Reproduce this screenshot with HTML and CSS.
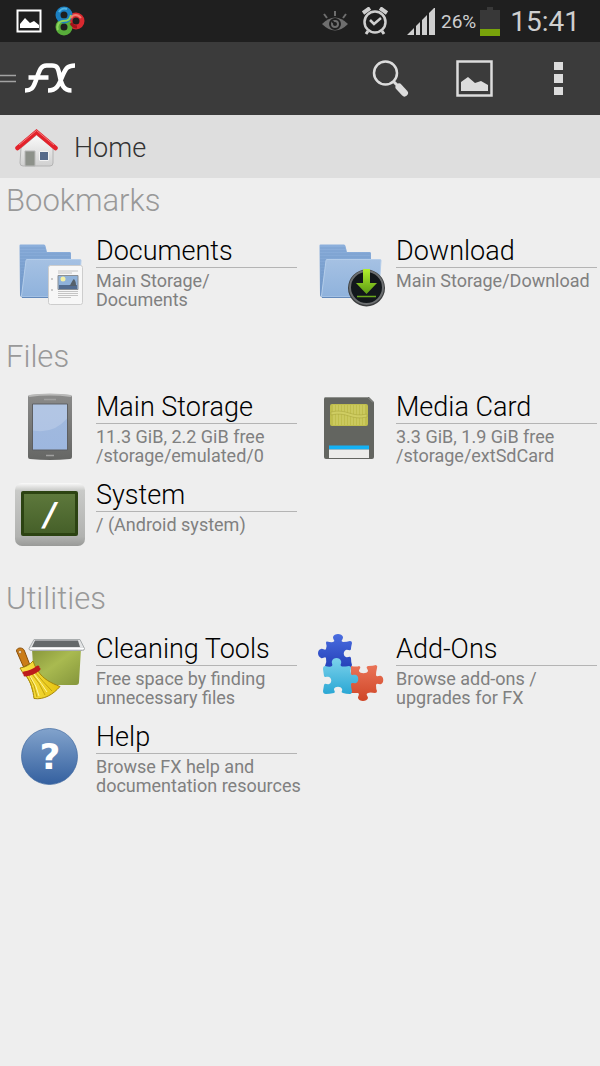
FILE: index.html
```html
<!DOCTYPE html>
<html lang="en">
<head>
  <meta charset="UTF-8" />
  <meta name="viewport" content="width=device-width, initial-scale=1.0"/>
  <title>FX File Explorer</title>
  <link rel="stylesheet" href="styles.css">
</head>
<body>
  <!-- shared gradients and the folder shape -->
  <svg class="defs" width="0" height="0" aria-hidden="true">
    <defs>
      <linearGradient id="g-back" x1="0" y1="0" x2="0" y2="1"><stop offset="0" stop-color="#8db0dc"/><stop offset="1" stop-color="#6d94c6"/></linearGradient>
      <linearGradient id="g-front" x1="0" y1="0" x2="0" y2="1"><stop offset="0" stop-color="#a5c1e3"/><stop offset="1" stop-color="#8fb2dc"/></linearGradient>
      <linearGradient id="g-arrow" x1="0" y1="0" x2="0" y2="1"><stop offset="0" stop-color="#b2f02c"/><stop offset="1" stop-color="#5c9c14"/></linearGradient>
      <linearGradient id="g-case" x1="0" y1="0" x2="0" y2="1"><stop offset="0" stop-color="#8b8b8a"/><stop offset="1" stop-color="#656664"/></linearGradient>
      <linearGradient id="g-glass" x1="0" y1="0" x2="0" y2="1"><stop offset="0" stop-color="#a2bade"/><stop offset="1" stop-color="#9db7df"/></linearGradient>
      <linearGradient id="g-frame" x1="0" y1="0" x2="0" y2="1"><stop offset="0" stop-color="#fafafa"/><stop offset=".12" stop-color="#c9cac8"/><stop offset=".85" stop-color="#b1b2b0"/><stop offset="1" stop-color="#999a98"/></linearGradient>
      <linearGradient id="g-screen" x1="0" y1="0" x2="0" y2="1"><stop offset="0" stop-color="#5d783c"/><stop offset="1" stop-color="#466029"/></linearGradient>
      <linearGradient id="g-bin" x1="0" y1="0" x2="1" y2="1"><stop offset="0" stop-color="#87953b"/><stop offset=".45" stop-color="#a9ba50"/><stop offset="1" stop-color="#84953b"/></linearGradient>
      <linearGradient id="g-broom" x1="0" y1="0" x2="1" y2="0"><stop offset="0" stop-color="#fbe34a"/><stop offset="1" stop-color="#e5c30f"/></linearGradient>
      <linearGradient id="g-help" x1="0" y1="0" x2="0" y2="1"><stop offset="0" stop-color="#82a3cc"/><stop offset="1" stop-color="#34609f"/></linearGradient>
      <linearGradient id="g-blue" x1="0" y1="0" x2="0" y2="1"><stop offset="0" stop-color="#4a6de0"/><stop offset="1" stop-color="#2440b8"/></linearGradient>
      <linearGradient id="g-cyan" x1="0" y1="0" x2="0" y2="1"><stop offset="0" stop-color="#7dd3ec"/><stop offset="1" stop-color="#2aa7d4"/></linearGradient>
      <linearGradient id="g-red" x1="0" y1="0" x2="0" y2="1"><stop offset="0" stop-color="#ea7458"/><stop offset="1" stop-color="#cf4526"/></linearGradient>
      <linearGradient id="g-wall" x1="0" y1="0" x2="0" y2="1"><stop offset="0" stop-color="#fafafa"/><stop offset="1" stop-color="#d0d0d0"/></linearGradient>
      <g id="folder">
        <path d="M5.500 10.500q0-1 1-1H30q1 0 1.500 1.500l1.500 6H56q1 0 1 1.500V60l-48 2.500q-3 0-3-3z" fill="url(#g-back)"/>
        <path d="M6 13h25M6 16h26M6 19h50M6 22h50M6 25h6M6 28h6M6 31h6M7 34h5M7 37h4M7 40h4M7 43h4M7 46h4M7 49h3M7 52h3M7 55h3" stroke="#7399c9" stroke-width="1" opacity=".6"/>
        <path d="M13 24.500h53q1 0 1 1l-2.500 36.500H8.500q-1 0-1-1l4.500-35.500q0-1 1-1z" fill="url(#g-front)" stroke="#b4cdea" stroke-width="1"/>
        <path d="M8 62.500h56" stroke="#6389bb"/>
      </g>
    </defs>
  </svg>

  <div class="status-bar">
    <svg width="26" height="24" viewBox="0 0 26 24"><path d="M1.500 1.500h23v21h-23z" fill="none" stroke="#fff" stroke-width="2"/><path d="M4 19v-4l5-6 5 5 4-2 5 4v3z" fill="#fff"/></svg>
    <svg class="app-mark" width="31" height="30" viewBox="0 0 31 30" fill="none">
      <circle cx="22" cy="15" r="6" stroke="#d8292f" stroke-width="5"/>
      <circle cx="10" cy="21" r="6" stroke="#58ad3a" stroke-width="5"/>
      <circle cx="10" cy="9" r="6" stroke="#1b7fc0" stroke-width="5"/>
      <path d="M5 6a6 6 0 0 1 8-3" stroke="#53b5e3" stroke-width="2"/>
      <path d="M4 24c-2-4 1-9 5-9 6 0 7-2 8-6" stroke="#8ed35c" stroke-width="2"/>
      <path d="M17 12c2-4 7-4 10 0" stroke="#f07b70" stroke-width="2"/>
      <path d="M17 17q2 4 6 4" stroke="#a3131b" stroke-width="3"/>
    </svg>
    <div class="status-right">
      <svg width="26" height="20" viewBox="0 0 26 20"><path d="M0 13q13-13 26 0-13 13-26 0z" fill="#6e6e6e"/><circle cx="13" cy="13" r="5" fill="none" stroke="#1f1f1f" stroke-width="2"/><circle cx="13" cy="13" r="2" fill="#1f1f1f"/><path d="M10 10l3 3" stroke="#1f1f1f" stroke-width="2"/><path d="M13 0v5M2 3l3 4M24 3l-3 4" stroke="#6e6e6e" stroke-width="2"/></svg>
      <svg class="alarm" width="26" height="28" viewBox="0 0 26 28" fill="none" stroke="#cfcfcf"><circle cx="13" cy="15" r="10.500" stroke-width="2.500"/><path d="M8 13l4 4 7-6" stroke-width="2.500"/><path d="M1 6l7-5M25 6l-7-5" stroke-width="4"/><path d="M6 24l-2 3M20 24l2 3" stroke-width="3"/></svg>
      <svg class="signal" width="28" height="27" viewBox="0 0 28 27" fill="#cfcfcf"><path d="M0 27l7-7v7zM9 27v-9l4-4v13zM15 27V12l5-5v20zM22 27V5l5-5h1v27z"/></svg>
      <span class="percent">26%</span>
      <svg width="20" height="29" viewBox="0 0 20 29"><path d="M7 0h6v3h7v26H0V3h7z" fill="#383838"/><path d="M0 22h20v7H0z" fill="#78a30b"/></svg>
      <span class="clock">15:41</span>
    </div>
  </div>

  <header class="action-bar">
    <button class="drawer" aria-label="Open menu">
      <svg width="16" height="10" viewBox="0 0 16 10"><path d="M0 1.500h16M0 7.500h16" stroke="#a2a2a2" stroke-width="1.500"/></svg>
      <svg class="logo" width="50" height="31" viewBox="25 63 50 31" fill="none" stroke="#fff" stroke-width="4.500"><path d="M25 90.500c6 0 8-2 10.500-9 4-11 5-16 11-16h5.500c5 0 6 2 7.500 9.500 2 10 4 15.500 12 15.500M75 65.500c-7 0-9 2-12.500 10.500-4 10-6 14.500-14.500 14.500M28.500 77.500h20"/></svg>
    </button>
    <div class="actions">
      <button aria-label="Search"><svg width="38" height="37" viewBox="0 0 38 37" fill="none" stroke="#dcdcdc"><circle cx="14.500" cy="13" r="11.500" stroke-width="2.500"/><path d="M22 21l5 5" stroke-width="3"/><path d="M28 27l5.500 6" stroke-width="7" stroke-linecap="round"/></svg></button>
      <button aria-label="Images"><svg width="37" height="37" viewBox="0 0 37 37"><path d="M1.500 1.500h34v34h-34z" fill="none" stroke="#dcdcdc" stroke-width="2.500"/><path d="M5 31V22l7-5 7 6 6-2 7 4v6z" fill="#dcdcdc"/></svg></button>
      <button aria-label="More options"><svg width="9" height="33" viewBox="0 0 9 33"><path d="M0 0h9v8H0zM0 12h9v9H0zM0 25h9v8H0z" fill="#dcdcdc"/></svg></button>
    </div>
  </header>

  <nav class="location">
    <svg width="43" height="38" viewBox="0 0 43 38">
      <path d="M6 19L21.500 6 38 19v15q0 3-3 3H8q-3 0-3-3z" fill="url(#g-wall)" stroke="#b4b4b4"/>
      <path d="M10 22h10v15H10z" fill="#8d918a" stroke="#b8b8b8"/>
      <path d="M24.500 22.500h9v9h-9z" fill="#566a8a" stroke="#f2f2f2"/>
      <path d="M2.500 19L21.500 3l19 16" fill="none" stroke="#e3222b" stroke-width="4.500" stroke-linecap="round"/>
      <path d="M4 16L21.500 1.500 39 16" fill="none" stroke="#f2797c"/>
    </svg>
    <a href="#">Home</a>
  </nav>

  <main>
    <section>
      <h2>Bookmarks</h2>
      <div class="items">
        <a class="item" href="#">
          <svg class="icon" viewBox="0 0 72 72">
            <use href="#folder"/>
            <rect x="34.500" y="30.500" width="34" height="39" rx="2" fill="#f7f7f7" stroke="#cdcdcd"/>
            <path d="M44 36h20M44 38h14M44 56.500h20M44 58.500h20M44 60.500h20M44 62.500h13" stroke="#c4c4c4"/>
            <path d="M44 40.500h20v14H44z" fill="#8fb2da" stroke="#8a8f94"/>
            <path d="M45 50h18v4H45z" fill="#526c90"/>
            <path d="M55 51c2-1 3-6 5-7 2 2 2 5 2 7z" fill="#56616b"/>
            <circle cx="49" cy="44" r="2.500" fill="#f3f0a4"/>
            <circle cx="38" cy="44" r="1" fill="#bbb"/><circle cx="38" cy="55" r="1" fill="#bbb"/>
          </svg>
          <div class="text">
            <h3>Documents</h3>
            <p>Main Storage/<br>Documents</p>
          </div>
        </a>
        <a class="item" href="#">
          <svg class="icon" viewBox="0 0 72 72">
            <use href="#folder"/>
            <circle cx="52.500" cy="53" r="18.500" fill="#3b3d3e"/>
            <circle cx="52.500" cy="52.500" r="16.500" fill="#12171b" stroke="#6c6f71" stroke-width="2"/>
            <path d="M49 34h7v14h7L52.500 59 42 48h7z" fill="url(#g-arrow)"/>
            <path d="M43 61.500h19" stroke="#6aa81c" stroke-width="1.500"/>
          </svg>
          <div class="text">
            <h3>Download</h3>
            <p>Main Storage/Download</p>
          </div>
        </a>
      </div>
    </section>

    <section>
      <h2>Files</h2>
      <div class="items">
        <a class="item" href="#">
          <svg class="icon" viewBox="0 0 72 72">
            <path d="M14 6q0-2 2-2 20-2 40 0 2 0 2 2v60q0 2-2 2-20 2-40 0-2 0-2-2z" fill="url(#g-case)"/>
            <path d="M15 5q21-3 42 0" fill="none" stroke="#b9b9b8" stroke-width="2"/>
            <path d="M30 8.500h12M32 64.500h8" stroke="#a0a09f" stroke-width="1.500"/>
            <path d="M18.500 13h35v46h-35z" fill="url(#g-glass)" stroke="#5d5f62"/>
            <path d="M19 13.500h34v14q-14 16-34 12z" fill="#fff" opacity=".18"/>
          </svg>
          <div class="text">
            <h3>Main Storage</h3>
            <p>11.3 GiB, 2.2 GiB free<br>/storage/emulated/0</p>
          </div>
        </a>
        <a class="item" href="#">
          <svg class="icon" viewBox="0 0 72 72">
            <path d="M10 8q0-2 2-2h43l5 5v55q0 2-2 2H12q-2 0-2-2z" fill="#636560"/>
            <path d="M11 6.500h43l5 5" fill="none" stroke="#8e908c"/>
            <rect x="16" y="13" width="38" height="22" rx="2" fill="#c0be4d"/>
            <path d="M20 14v20M23 14v20M26 14v20M29 14v20M32 14v20M35 14v20M38 14v20M41 14v20M44 14v20M47 14v20M50 14v20" stroke="#d6d470"/>
            <path d="M17 21c16-4 20 6 36 2v3c-16 4-20-6-36-2z" fill="#cfcd62" stroke="#a4a13a" stroke-width=".5"/>
            <path d="M15 54.500h40v4H15z" fill="#14b2f5"/>
            <path d="M15 58.500h40V67H15z" fill="#ececea"/>
          </svg>
          <div class="text">
            <h3>Media Card</h3>
            <p>3.3 GiB, 1.9 GiB free<br>/storage/extSdCard</p>
          </div>
        </a>
        <a class="item" href="#">
          <svg class="icon" viewBox="0 0 72 72">
            <rect x="1" y="4" width="70" height="63" rx="7" fill="url(#g-frame)"/>
            <rect x="7" y="12" width="57" height="45" rx="2" fill="#2c4312"/>
            <rect x="10" y="15" width="51" height="39" fill="url(#g-screen)"/>
            <text x="36" y="46" class="slash">/</text>
          </svg>
          <div class="text">
            <h3>System</h3>
            <p>/ (Android system)</p>
          </div>
        </a>
      </div>
    </section>

    <section>
      <h2>Utilities</h2>
      <div class="items">
        <a class="item" href="#">
          <svg class="icon" viewBox="0 0 72 72">
            <path d="M18 16h49l-2 33q0 3-3 3H22q-2 0-2-3z" fill="url(#g-bin)"/>
            <path d="M20 6.500h46l4.500 9q0 2-2 2H17q-2 0-2-2z" fill="#e2e3e4" stroke="#a9adae"/>
            <path d="M21 7.500h43l2 6.500H18z" fill="#65696a"/>
            <path d="M16 15.500h54" stroke="#fff"/>
            <path d="M2.500 18c0-4 7-4 8 0l5 13-6 3z" fill="#cb7d18" stroke="#8a4f0a"/>
            <circle cx="6" cy="19" r="1.500" fill="#f8e6c8" stroke="#8a4f0a" stroke-width=".5"/>
            <path d="M6 35q8-1 13-7l2 5 3 5c5 8 13 12 22 15.500-7 8-16 13.500-26 12-1-8-3-17-9-24-3-2-4-5-5-6.500z" fill="url(#g-broom)" stroke="#a58609"/>
            <path d="M15 42q6 10 8 22M18 41q8 9 13 21M21 39q8 10 17 19M12 42q6 9 7 17" fill="none" stroke="#b59607" stroke-width=".8"/>
            <path d="M16 43q7 10 9 20M20 41q8 10 13 18" fill="none" stroke="#fff5a0"/>
            <path d="M10 40q8-1 14-6M11 42q8-1 14-6" fill="none" stroke="#bd1c1c" stroke-width="3" stroke-linecap="round"/>
          </svg>
          <div class="text">
            <h3>Cleaning Tools</h3>
            <p>Free space by finding<br>unnecessary files</p>
          </div>
        </a>
        <a class="item" href="#">
          <svg class="icon" viewBox="0 0 72 72">
            <path d="M13 8.500q4 1 6 .5c3-1 0-2 0-5 1-4 9-4 10 0 0 3-3 4 0 5q4 0 7-1 2 0 2 2-1 4-1 6c-1 3-3 0-5 1-3 1-3 6 0 7 2 1 4-2 5 1q0 4 1 7-1 4-3 3H13q-2 0-2-2 2-4 1-8c-1-2-3 1-5 0-4-2-4-8 0-9 2-1 4 2 5 0q1-4 0-6 0-2 1-1.500z" fill="url(#g-blue)"/>
            <path d="M37 33q6 1 8 0c3 1 0 3 0 5 1 3 8 3 9 0 0-2-3-4 0-5q5 0 8-1 2 1 1 3-1 4-1 7c1 3 3 0 5 1 3 1 3 7 0 8-2 1-4-2-5 1q0 4 1 6 0 2-2 2-5-1-7 0c-3 1 0 3 0 5-1 4-9 4-10 0 0-2 2-4 0-5H37z" fill="url(#g-red)"/>
            <path d="M11 33q4 1 6 .5c3-1 0-3 1-5.500 1-4 8-4 9 0 1 3-2 4 1 5.500q4 0 7-.5 2 0 2 2-1 3 0 6c1 2 3 0 5 1 3 1 3 7 0 8-2 1-4-1-5 1q0 4 1 7 0 3-2 3-4 0-7-1c-3-1 0-2-1-4-1-3-7-3-8 0 0 2 2 3 0 4q-5 1-8 1-3 0-3-3l1-6c1-3 3 0 5-1 3-1 3-6 0-7-2-1-4 1-5-1l-1-7q0-3 2-3z" fill="url(#g-cyan)"/>
          </svg>
          <div class="text">
            <h3>Add-Ons</h3>
            <p>Browse add-ons /<br>upgrades for FX</p>
          </div>
        </a>
        <a class="item" href="#">
          <svg class="icon" viewBox="0 0 72 72">
            <circle cx="35.500" cy="35.500" r="28" fill="url(#g-help)" stroke="#3f689f" stroke-opacity=".7"/>
            <text x="36" y="48" class="question">?</text>
          </svg>
          <div class="text">
            <h3>Help</h3>
            <p>Browse FX help and<br>documentation resources</p>
          </div>
        </a>
      </div>
    </section>
  </main>
</body>
</html>
```
FILE: styles.css
```css
body {
  margin: 0;
  min-height: 100vh;
  background-color: #eeeeee;
  font-family: Roboto, "Open Sans", sans-serif;
}

svg {
  display: block;
  flex-shrink: 0;
}

.defs {
  position: absolute;
}

a {
  color: inherit;
  text-decoration: none;
}

button {
  border: 0;
  padding: 0;
  background: none;
  cursor: pointer;
}

.status-bar {
  display: flex;
  align-items: center;
  gap: 12px;
  height: 42px;
  padding: 0 20px 0 16px;
  background-color: #1f1f1f;
  color: #cfcfcf;
}

.status-right {
  display: flex;
  align-items: center;
  margin-left: auto;
}

.alarm {
  margin-left: 14px;
}

.signal {
  margin: 0 6px 0 19px;
}

.percent {
  margin-right: 4px;
  font-size: 19px;
}

.clock {
  margin-left: 10px;
  font-size: 28px;
}

.action-bar {
  display: flex;
  justify-content: space-between;
  height: 73px;
  background-color: #3b3b3b;
}

.drawer {
  display: flex;
  align-items: center;
  gap: 9px;
}

.actions {
  display: flex;
}

.actions button {
  display: flex;
  align-items: center;
  justify-content: center;
  width: 84px;
}

.location {
  display: flex;
  align-items: center;
  gap: 16px;
  height: 63px;
  padding: 2px 0 0 15px;
  box-sizing: border-box;
  background-color: #dedede;
  color: #333;
  font-size: 27px;
  font-weight: 300;
}

section {
  padding-bottom: 11px;
}

h2 {
  margin: 0 0 12px;
  padding-left: 6px;
  color: #999;
  font-size: 31px;
  font-weight: 300;
  line-height: 45px;
}

.items {
  display: grid;
  grid-template-columns: 1fr 1fr;
}

.item {
  display: flex;
  gap: 10px;
  min-width: 0;
  min-height: 86px;
  padding: 0 3px 0 14px;
  box-sizing: border-box;
}

.icon {
  width: 72px;
  height: 72px;
}

.text {
  flex: 1;
  min-width: 0;
  padding-bottom: 14px;
}

h3 {
  margin: 0;
  border-bottom: 1px solid #b4b4b4;
  color: #000;
  font-size: 27px;
  font-weight: 300;
  line-height: 32px;
}

.text p {
  margin: 0;
  padding-top: 3px;
  color: #808080;
  font-size: 18px;
  line-height: 19px;
  white-space: nowrap;
}

.slash,
.question {
  fill: #fff;
  font-family: "DejaVu Sans", sans-serif;
  font-weight: bold;
  text-anchor: middle;
}

.slash {
  font-size: 32px;
  font-style: italic;
}

.question {
  font-size: 36px;
}
```
